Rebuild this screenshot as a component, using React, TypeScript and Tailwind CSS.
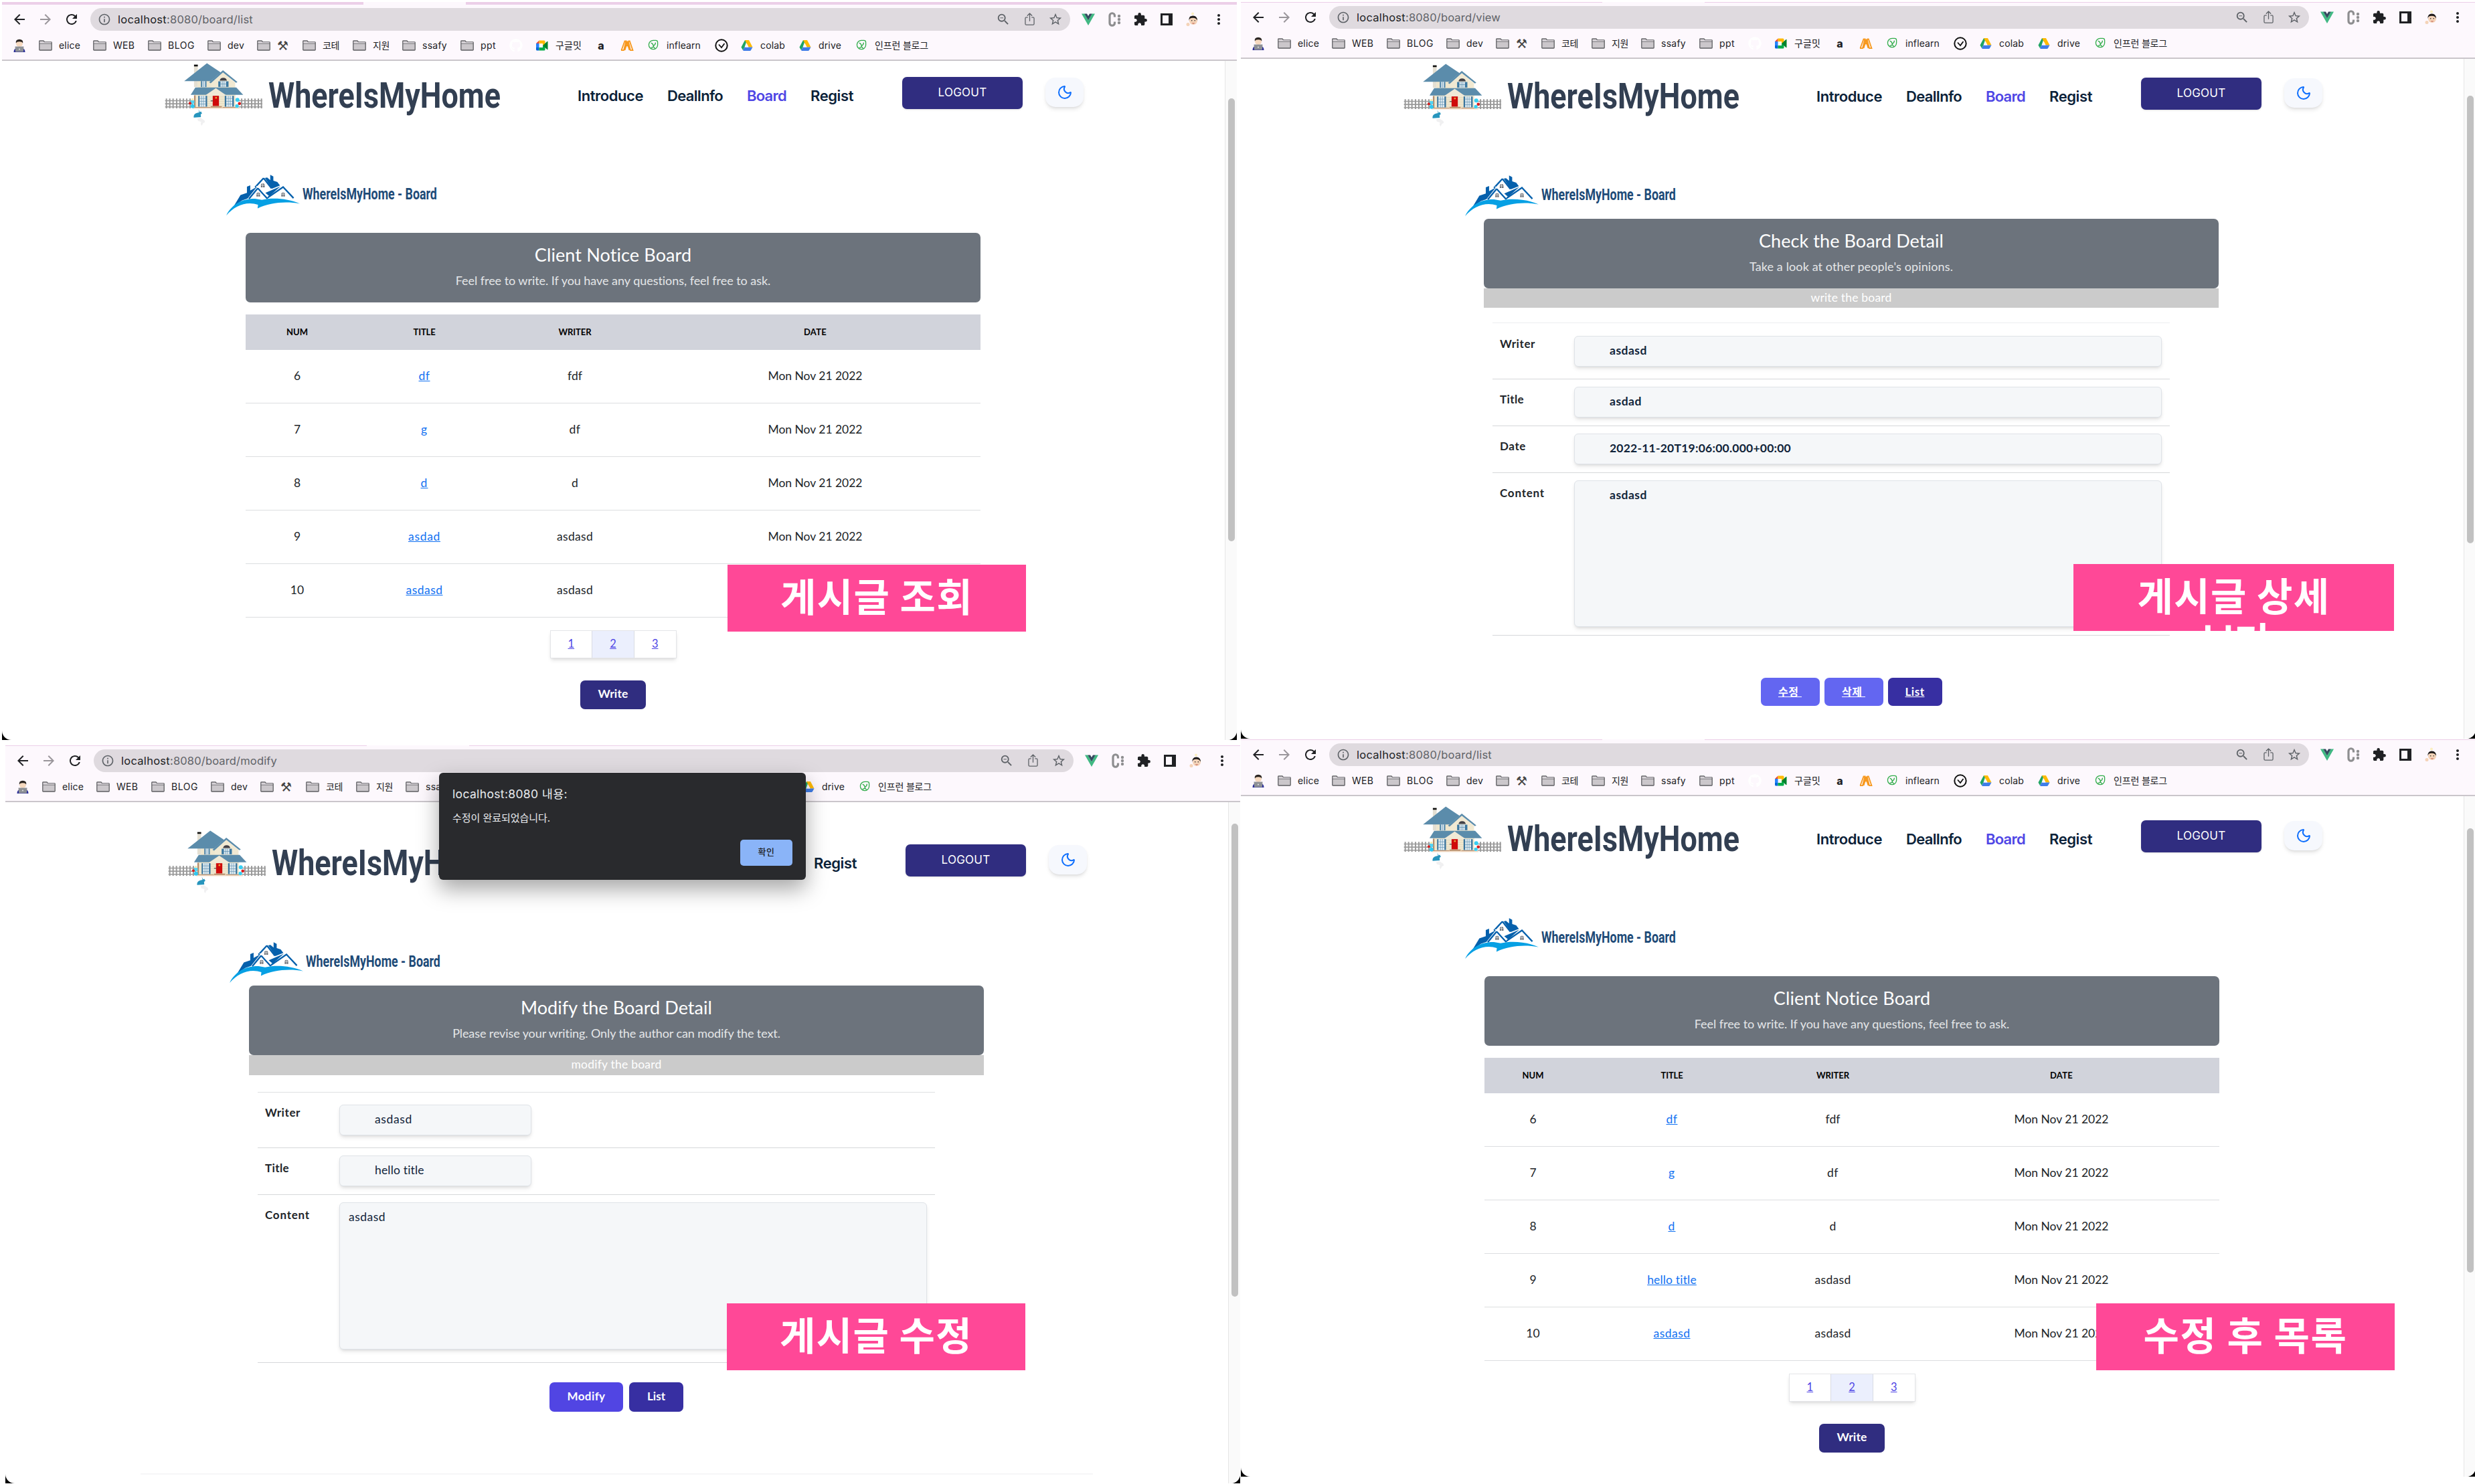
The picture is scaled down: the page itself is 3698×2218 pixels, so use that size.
import React, { useLayoutEffect, useRef, useState } from "react";
import {
  MdArrowBack,
  MdArrowForward,
  MdExtension,
  MdInfoOutline,
  MdMoreVert,
  MdRefresh,
  MdStarBorder,
  MdZoomOut,
} from "react-icons/md";
import { IoShareOutline } from "react-icons/io5";
import { FaGithub } from "react-icons/fa";
import { Moon } from "lucide-react";

/* ---------- text helpers ---------- */

/** Tracks a single line of text so that it fills exactly `w` pixels. */
function Fit({ w, children, className = "" }: { w: number; children: string; className?: string }) {
  const ref = useRef<HTMLSpanElement>(null);
  const [spacing, setSpacing] = useState(0);
  useLayoutEffect(() => {
    if (ref.current) {
      const natural = ref.current.getBoundingClientRect().width;
      setSpacing((w - natural) / children.length);
    }
  }, []);
  return (
    <span ref={ref} className={`whitespace-pre ${className}`} style={{ letterSpacing: `${spacing}px` }}>
      {children}
    </span>
  );
}

/** Condenses a single line of text horizontally to `w` pixels. */
function Condensed({ w, children, className = "" }: { w: number; children: string; className?: string }) {
  const ref = useRef<HTMLSpanElement>(null);
  const [scale, setScale] = useState(1);
  useLayoutEffect(() => {
    if (ref.current) setScale(w / ref.current.offsetWidth);
  }, []);
  return (
    <span className={`block shrink-0 ${className}`} style={{ width: w }}>
      <span ref={ref} className="inline-block origin-left whitespace-nowrap" style={{ transform: `scaleX(${scale})` }}>
        {children}
      </span>
    </span>
  );
}

/* ---------- drawings ---------- */

const FENCE_LEFT = [41, 56, 71, 87, 102, 117, 132, 147];
const FENCE_RIGHT = [379, 394, 409, 424, 439, 454, 468];

function HouseLogo() {
  return (
    <svg viewBox="30 15 445 290" className="h-[97px] w-[148px] shrink-0">
      <g stroke="#9a9a9a" strokeWidth="6">
        {FENCE_LEFT.concat(FENCE_RIGHT).map((x) => (
          <line key={x} x1={x} x2={x} y1="177" y2="222" />
        ))}
        <g strokeWidth="5">
          <path d="M35 187H160M35 201H160M35 215H160M365 187H472M365 201H472M365 215H472" />
        </g>
      </g>
      <rect x="165" y="26" width="17" height="100" fill="#e4dfd2" />
      <rect x="165" y="25" width="17" height="8" fill="#111" />
      <rect x="181" y="96" width="90" height="40" fill="#efe6cd" />
      <path d="M243 105L295 60L350 105V135H243Z" fill="#f1e9d2" />
      <path d="M223 19L285 60L240 99H121Z" fill="#5b8cab" />
      <path d="M233 104L295 50L360 103L354 107L295 60L240 109Z" fill="#5b8cab" />
      <rect x="196" y="99" width="25" height="27" fill="#4b83a8" />
      <path d="M202 99h13v27h-13z" fill="#dfeaf0" />
      <rect x="274" y="100" width="46" height="25" fill="#3b78a2" />
      <path d="M284 100h25v25h-25z" fill="#dfeaf0" />
      <path d="M292 100v25M300 100v25M284 112h25M208 99v27" stroke="#4b83a8" strokeWidth="2" />
      <path d="M280 97a17 17 0 0 1 33 0z" fill="#414148" />
      <rect x="166" y="155" width="185" height="65" fill="#f1e8cf" />
      <path d="M171 128H355L386 161H150Z" fill="#5b8cab" />
      <path d="M219 161L263 131L307 161V166H219Z" fill="#f0e9d6" />
      <path d="M223 170h80M223 180h80M223 190h80M223 200h80M223 210h80" stroke="#ddd3b8" strokeWidth="2" />
      <rect x="165" y="163" width="7" height="55" fill="#b58c6c" />
      <rect x="184" y="165" width="40" height="49" fill="#39749d" />
      <rect x="190" y="165" width="27" height="49" fill="#e2edf2" />
      <rect x="303" y="165" width="41" height="49" fill="#39749d" />
      <rect x="310" y="165" width="27" height="49" fill="#e2edf2" />
      <path d="M199 165v49M208 165v49M190 177h27M190 190h27M190 202h27M319 165v49M328 165v49M310 177h27M310 190h27M310 202h27" stroke="#5d8fb0" strokeWidth="2" />
      <rect x="249" y="165" width="28" height="46" fill="#cf0a0a" />
      <circle cx="264" cy="174" r="4" fill="#e9a23b" />
      <path d="M240 188h10" stroke="#333" strokeWidth="3" />
      <path d="M167 216h72v5h-72zM293 216h60v5h-60zM240 212h50v6h-50z" fill="#b98d6b" />
      <path d="M160 221h210" stroke="#f2dcc6" strokeWidth="4" />
      <circle cx="158" cy="193" r="9" fill="#52d3f3" />
      <circle cx="159" cy="212" r="9" fill="#2fc7f0" />
      <circle cx="147" cy="198" r="6" fill="#d81e1e" />
      <circle cx="158" cy="181" r="5" fill="#f4eab0" />
      <circle cx="360" cy="183" r="9" fill="#38cff2" />
      <circle cx="358" cy="211" r="8" fill="#38cff2" />
      <circle cx="369" cy="200" r="7" fill="#d81e1e" />
      <path d="M185 226l6 12 5-3 5 9-6 5 1 12-32 2c-2-10 4-18 14-21l10-2z" fill="#2795bd" />
      <path d="M180 268l14-4 18 12 2 8-8 4-6 12-5-8 2-10-14-4z" fill="#f0f0f1" />
    </svg>
  );
}

function BoardLogo() {
  return (
    <svg viewBox="300 515 340 190" className="h-[63px] w-[113px] shrink-0">
      <path d="M504 519l14 7v19l18 6 12 16-36 14-32-48 10-2 14 12z" fill="#0560ac" />
      <path d="M399 572l15-6v24l30-17-42 53-24 8-37 24 29-48 29-10z" fill="#0560ac" />
      <path d="M474 534L436 575M474 534L510 580" stroke="#0560ac" strokeWidth="7" fill="none" />
      <path d="M448 579L408 627M448 579L489 624L562 574L609 624" stroke="#0560ac" strokeWidth="7" fill="none" />
      <path d="M482 600l68-29-50 44z" fill="#0560ac" />
      <path d="M440 570l8 2 44 48" stroke="#fff" strokeWidth="3" fill="none" />
      <g fill="#6b6f76">
        <path d="M462 563a9 9 0 0 1 17 0v12h-17z" />
        <path d="M442 603a9 9 0 0 1 16 0v14h-16z" />
        <path d="M554 603a9 9 0 0 1 16 0v14h-16z" />
      </g>
      <path d="M470 554v22M461 566h19M450 594v24M441 606h18M562 594v24M553 606h18" stroke="#fff" strokeWidth="2" />
      <path d="M306 702C330 652 380 624 440 627l26 5c50-12 120-6 171 17c-60-12-135-6-190 21l2-16c-50-18-105 3-143 48z" fill="#06a0e4" />
    </svg>
  );
}

function FolderIcon() {
  return (
    <svg viewBox="0 0 20 16" className="h-4 w-5 shrink-0">
      <path d="M.8 14.2V1.6Q.8.8 1.6.8H7l1.6 2h9.8q.8 0 .8.8v10.6q0 .8-.8.8H1.6q-.8 0-.8-.8z" fill="#cbc7cb" stroke="#5f5f63" strokeWidth="1.3" />
      <path d="M1 5h18" stroke="#5f5f63" strokeWidth="1.2" />
      <path d="M1.5 3.9h17" stroke="#f3eff3" strokeWidth="1" />
    </svg>
  );
}

function CoderIcon() {
  return (
    <svg viewBox="0 0 20 20" className="h-5 w-5 shrink-0">
      <path d="M1.5 20q0-5 4-6h9q4 1 4 6z" fill="#2c2f9a" />
      <circle cx="10" cy="7" r="5" fill="#f6d9bf" />
      <path d="M4.8 6.5Q4 1 10 .8 16 1 15.2 6.5 14 4 10 4.2 6 4 4.8 6.5z" fill="#2b2522" />
      <path d="M3.500 11.500h13l-.6 8H4.100z" fill="#8d9095" />
      <circle cx="10" cy="15.500" r="1" fill="#e8e8ea" />
    </svg>
  );
}

function MeetIcon() {
  return (
    <svg viewBox="0 0 20 16" className="h-4 w-5 shrink-0">
      <path d="M1 5L5.500.5V5z" fill="#ea4335" />
      <path d="M1 5h4.500v6H1z" fill="#2684fc" />
      <path d="M1 11h4.500v4.500H2.500Q1 15.500 1 14z" fill="#0066da" />
      <path d="M5.500.5H13q1.500 0 1.500 1.500v5L11 8V5H5.500z" fill="#ffba00" />
      <path d="M5.500 11H11V8l3.500 1v5q0 1.500-1.500 1.500H5.500z" fill="#00ac47" />
      <path d="M11 8l6.500-6q1-.5 1 .5v11q0 1-1 .5z" fill="#00832d" />
    </svg>
  );
}

function DriveIcon() {
  return (
    <svg viewBox="0 0 20 18" className="h-[18px] w-5 shrink-0">
      <path d="M7 1h3l-3.500 10.500L4 16 1.500 11.500z" fill="#1fa463" />
      <path d="M7 1h6l5.500 10.500h-6z" fill="#ffba00" />
      <path d="M4 16l2.500-4.500h12L16 16q-.5 1-1.500 1h-9Q4.500 17 4 16z" fill="#3f7de8" />
      <path d="M10 6.500l2.600 5H7.400z" fill="#fdf8fd" />
    </svg>
  );
}

function SproutIcon() {
  return (
    <svg viewBox="0 0 20 18" className="h-[17px] w-5 shrink-0" fill="none" stroke="#33ad4c" strokeWidth="1.400">
      <path d="M10 1.500h4q3 0 3 3v4.500a7 7 0 1 1-7-7.500z" />
      <path d="M6.500 5.500q3.500 1 4 6l2.500 3M13.500 5q.5 3-3 5M10.500 11q-1.500 2.500-4 1.500" />
    </svg>
  );
}

function TrailIcon() {
  return (
    <svg viewBox="0 0 20 16" className="h-4 w-5 shrink-0" fill="none" stroke="#f7981d" strokeWidth="1.800">
      <path d="M1 15.200h4L8.500 1.500H6.500L1.500 15M8.500 1.500L10 9l1.500-7.500L15 15.200h3.500L13.800 1.500h-2M6.500 15L10 4l3.500 11" />
    </svg>
  );
}

function CheckIcon() {
  return (
    <svg viewBox="0 0 20 20" className="h-5 w-5 shrink-0" fill="none" stroke="#111" strokeWidth="2">
      <circle cx="10" cy="10" r="8.700" />
      <path d="M6 8.500l4 4.500 4.500-6" strokeWidth="1.800" />
    </svg>
  );
}

function VueIcon() {
  return (
    <svg viewBox="0 0 24 24" className="h-6 w-6">
      <path d="M2 3.500h4.500L12 13l5.500-9.500H22L12 21z" fill="#41b883" />
      <path d="M6.300 3.500H10l2 3.500 2-3.500h3.700L12 13.300z" fill="#34495e" />
    </svg>
  );
}

function ColumnsIcon() {
  return (
    <svg viewBox="0 0 24 24" className="h-6 w-6">
      <path d="M12.500 8.500V6.500a3.700 3.700 0 0 0-7.500 0v11a3.700 3.700 0 0 0 7.500 0v-2" fill="none" stroke="#8e8e90" strokeWidth="3.200" />
      <g fill="#8e8e90">
        <circle cx="19" cy="7" r="2.200" />
        <circle cx="19" cy="12" r="2.200" />
        <circle cx="19" cy="17" r="2.200" />
      </g>
    </svg>
  );
}

function SidePanelIcon() {
  return (
    <svg viewBox="0 0 24 24" className="h-6 w-6">
      <path d="M3 3h18v18H3z" fill="#202124" />
      <path d="M6 6h9v12H6z" fill="#fdf8fd" />
    </svg>
  );
}

function AvatarIcon() {
  return (
    <svg viewBox="0 0 24 24" className="h-6 w-6">
      <circle cx="12" cy="3.500" r="2" fill="#fbeec0" />
      <circle cx="13" cy="14" r="6" fill="#f4d3b8" />
      <path d="M6.500 14Q6 6.500 12.500 6.500T19 14q-1-4-6.500-4.200T6.500 14z" fill="#1e1a1a" />
      <circle cx="5" cy="19.500" r="2.500" fill="#f4d3b8" />
      <path d="M10.500 17.500q2.500 2 5 0z" fill="#b5473e" />
      <circle cx="10.700" cy="13.800" r=".8" fill="#222" />
      <circle cx="15.300" cy="13.800" r=".8" fill="#222" />
    </svg>
  );
}

/* ---------- browser chrome ---------- */

type Bookmark = { slot: string; icon: React.ReactNode; label?: string; w?: number; text?: string };

const BOOKMARKS: Bookmark[] = [
  { slot: "w-[39px]", icon: <CoderIcon /> },
  { slot: "w-[81px]", icon: <FolderIcon />, label: "elice", w: 32 },
  { slot: "w-[82px]", icon: <FolderIcon />, label: "WEB", w: 32 },
  { slot: "w-[89px]", icon: <FolderIcon />, label: "BLOG", w: 40 },
  { slot: "w-[74px]", icon: <FolderIcon />, label: "dev", w: 25 },
  { slot: "w-[68px]", icon: <FolderIcon />, label: "⚒", w: 16, text: "font-['DejaVu_Sans'] text-[19px] leading-5 text-[#444]" },
  { slot: "w-[75px]", icon: <FolderIcon />, label: "코테", w: 25 },
  { slot: "w-[74px]", icon: <FolderIcon />, label: "지원", w: 25 },
  { slot: "w-[87px]", icon: <FolderIcon />, label: "ssafy", w: 37 },
  { slot: "w-[73px]", icon: <FolderIcon />, label: "ppt", w: 23 },
  { slot: "w-[39px]", icon: <FaGithub className="h-5 w-5 text-white" /> },
  { slot: "w-[88px]", icon: <MeetIcon />, label: "구글밋", w: 39 },
  { slot: "w-[39px]", icon: <span className="w-5 text-center text-[16px] leading-5 font-extrabold">a</span> },
  { slot: "w-[39px]", icon: <TrailIcon /> },
  { slot: "w-[102px]", icon: <SproutIcon />, label: "inflearn", w: 51 },
  { slot: "w-[38px]", icon: <CheckIcon /> },
  { slot: "w-[87px]", icon: <DriveIcon />, label: "colab", w: 37 },
  { slot: "w-[84px]", icon: <DriveIcon />, label: "drive", w: 34 },
  { slot: "w-[120px]", icon: <SproutIcon />, label: "인프런 블로그", w: 80 },
];

function Chrome({ path, pathW, strip }: { path: string; pathW: number; strip: string }) {
  return (
    <header className="shrink-0 border-b-2 border-[#cac6cb] bg-[#fdf8fd] font-['Inter','Noto_Sans_CJK_KR',sans-serif] text-[#202124]">
      <div className={`flex bg-[#eccfe8] ${strip}`}>
        <div className="ml-[540px] w-[153px] bg-[#fdf8fd]" />
      </div>
      <div className="mt-[5px] flex h-[34px] items-center pl-[14px]">
        <div className="flex gap-[15px]">
          <MdArrowBack size={24} />
          <MdArrowForward size={24} className="text-[#9a969b]" />
          <MdRefresh size={24} />
        </div>
        <div className="ml-4 flex h-[34px] w-[1464px] items-center rounded-full bg-[#dfdadf] pr-[10px] pl-[11px] text-[16.500px] text-[#5f6368]">
          <MdInfoOutline size={20} />
          <Fit w={73} className="ml-[10px] text-[#202124]">localhost</Fit>
          <Fit w={pathW}>{path}</Fit>
          <div className="ml-auto flex gap-[15px]">
            <span className="flex w-6 justify-center"><MdZoomOut size={22} /></span>
            <span className="flex w-6 justify-center"><IoShareOutline size={21} /></span>
            <span className="flex w-6 justify-center"><MdStarBorder size={22} /></span>
          </div>
        </div>
        <div className="ml-[15px] flex items-center gap-[15px]">
          <VueIcon />
          <ColumnsIcon />
          <MdExtension size={24} className="scale-90" />
          <SidePanelIcon />
          <AvatarIcon />
          <MdMoreVert size={24} />
        </div>
      </div>
      <div className="flex h-[43px] items-center pl-4 text-[14px]">
        {BOOKMARKS.map((b, i) => (
          <div key={i} className={`flex shrink-0 items-center gap-[10px] ${b.slot}`}>
            {b.icon}
            {b.label && <Fit w={b.w ?? 30} className={b.text}>{b.label}</Fit>}
          </div>
        ))}
      </div>
    </header>
  );
}

type WindowProps = {
  path: string;
  pathW: number;
  strip?: string;
  height: string;
  offset: string;
  thumb: string;
  children: React.ReactNode;
};

function BrowserWindow({ path, pathW, strip = "h-px", height, offset, thumb, children }: WindowProps) {
  return (
    <section className={`w-[1845px] shrink-0 bg-black ${height}`}>
      <div className="flex h-full flex-col overflow-hidden rounded-b-[14px] bg-white">
        <Chrome path={path} pathW={pathW} strip={strip} />
        <div className="flex min-h-0 flex-1">
          <main className={`min-w-0 flex-1 overflow-hidden font-['Lato','Noto_Sans_CJK_KR',sans-serif] text-[17.500px] text-[#212529] ${offset}`}>
            <SiteHeader />
            {children}
          </main>
          <div className="w-[18px] shrink-0 border-l border-[#e6e6e6] bg-[#fafafa] pl-[4px]">
            <div className={`w-[10px] rounded-full bg-[#c1c1c1] ${thumb}`} />
          </div>
        </div>
      </div>
    </section>
  );
}

/* ---------- site ---------- */

function SiteHeader() {
  return (
    <>
      <div className="flex h-[97px] items-start pl-[242px]">
        <HouseLogo />
        <Condensed w={347} className="mt-[20px] ml-2 font-['Roboto'] text-[53px] leading-[60px] font-bold text-[#323f52]">
          WhereIsMyHome
        </Condensed>
        <nav className="mt-[34px] ml-[115px] flex gap-9 font-['Inter'] text-[22px] leading-8 font-semibold tracking-tight text-[#0b2138]">
          <Fit w={98}>Introduce</Fit>
          <Fit w={83}>DealInfo</Fit>
          <Fit w={59} className="text-[#4f46e5]">Board</Fit>
          <Fit w={64}>Regist</Fit>
        </nav>
        <button className="mt-[22px] ml-[73px] h-[48px] w-[180px] rounded-[7px] bg-[#302d80] font-['Inter'] text-[17px] text-white shadow-sm">
          <Fit w={73}>LOGOUT</Fit>
        </button>
        <button className="mt-[23px] ml-[34px] flex h-[44px] w-[57px] items-center justify-center rounded-[15px] bg-[#f6f8fd] text-[#0d6efd] shadow-md shadow-black/10">
          <Moon size={24} strokeWidth={2} />
        </button>
      </div>
      <div className="mt-[70px] flex pl-[333px]">
        <BoardLogo />
        <Condensed w={201} className="mt-[15px] ml-[3px] font-['Roboto'] text-[24px] leading-[30px] font-bold text-[#1d4a77]">
          WhereIsMyHome - Board
        </Condensed>
      </div>
    </>
  );
}

function Banner({ title, titleW, text, textW }: { title: string; titleW: number; text: string; textW: number }) {
  return (
    <div className="h-[104px] rounded-[7px] bg-[#6c737c] pt-[17px] text-center text-white">
      <h1 className="text-[27px] leading-8"><Fit w={titleW}>{title}</Fit></h1>
      <p className="mt-[11px] text-[18px] leading-[22px] text-[#e4e6e8]"><Fit w={textW}>{text}</Fit></p>
    </div>
  );
}

type Row = { num: string; title: string; titleW: number; writer: string; writerW: number; date?: string };

function ListPage({ rows, cols }: { rows: Row[]; cols: string }) {
  return (
    <div className="mt-[25px] ml-[364px] w-[1098px]">
      <Banner title="Client Notice Board" titleW={235} text="Feel free to write. If you have any questions, feel free to ask." textW={471} />
      <div className={`mt-[18px] grid h-[53px] items-center bg-[#d1d3db] text-center text-[13px] font-bold text-black ${cols}`}>
        <span><Fit w={32}>NUM</Fit></span>
        <span><Fit w={33}>TITLE</Fit></span>
        <span><Fit w={49}>WRITER</Fit></span>
        <span><Fit w={34}>DATE</Fit></span>
      </div>
      {rows.map((r) => (
        <div key={r.num} className={`grid h-[80px] items-center border-b border-[#dcdee0] text-center ${cols}`}>
          <span>{r.num}</span>
          <a className="text-[#1272f2] underline"><Fit w={r.titleW}>{r.title}</Fit></a>
          <span><Fit w={r.writerW}>{r.writer}</Fit></span>
          {r.date && <span><Fit w={141}>{r.date}</Fit></span>}
        </div>
      ))}
      <div className="mt-[19px] flex justify-center">
        <div className="flex h-[42px] w-[189px] divide-x divide-[#d9dce3] border border-[#e4e5e8] text-[16.500px] leading-[38px] text-[#4f46e5] underline shadow-md shadow-black/10">
          <span className="flex-1 text-center">1</span>
          <span className="flex-1 bg-[#ebeffd] text-center">2</span>
          <span className="flex-1 text-center">3</span>
        </div>
      </div>
      <div className="mt-[33px] flex justify-center">
        <button className="h-[43px] w-[98px] rounded-[7px] bg-[#302d80] pb-[2px] font-bold text-white"><Fit w={45}>Write</Fit></button>
      </div>
    </div>
  );
}

type FieldProps = {
  label: string;
  labelW: number;
  value: string;
  valueW: number;
  row: string;
  box: string;
};

function Field({ label, labelW, value, valueW, row, box }: FieldProps) {
  return (
    <div className={`ml-[13px] flex w-[1012px] items-start border-b border-[#d6d8da] ${row}`}>
      <div className="w-[110px] pl-[11px] text-[17px] leading-5 font-bold"><Fit w={labelW}>{label}</Fit></div>
      <div className={`ml-3 rounded-[6px] border border-[#dfe3e8] bg-[#f5f7f9] leading-[42px] text-[#10243a] shadow-md shadow-black/10 ${box}`}>
        <Fit w={valueW}>{value}</Fit>
      </div>
    </div>
  );
}

function Subtitle({ children, w, className }: { children: string; w: number; className: string }) {
  return (
    <div className={`bg-[#cbcbcb] text-center text-white ${className}`}>
      <Fit w={w}>{children}</Fit>
    </div>
  );
}

function DetailPage() {
  return (
    <div className="mt-[3px] ml-[363px] w-[1098px]">
      <Banner title="Check the Board Detail" titleW={276} text="Take a look at other people's opinions." textW={304} />
      <Subtitle w={121} className="h-[29px] leading-[27px]">write the board</Subtitle>
      <div className="mt-[22px] ml-[13px] w-[1012px] border-t border-[#eceef0]" />
      <Field label="Writer" labelW={53} value="asdasd" valueW={56} row="h-[84px] *:first:mt-[21px]" box="mt-[19px] h-[46px] w-[878px] pl-[52px] font-bold" />
      <Field label="Title" labelW={36} value="asdad" valueW={48} row="h-[70px] *:first:mt-[20px]" box="mt-[11px] h-[46px] w-[878px] pl-[52px] font-bold" />
      <Field label="Date" labelW={39} value="2022-11-20T19:06:00.000+00:00" valueW={271} row="h-[70px] *:first:mt-[20px]" box="mt-[11px] h-[46px] w-[878px] pl-[52px] font-bold" />
      <Field label="Content" labelW={67} value="asdasd" valueW={56} row="h-[243px] *:first:mt-[20px]" box="mt-[11px] h-[219px] w-[878px] pl-[52px] font-bold" />
      <div className="mt-[63px] flex justify-center gap-[7px] text-[16px] leading-[38px] font-bold text-white">
        <button className="h-[42px] w-[88px] rounded-[7px] bg-[#6366f1] underline"><Fit w={35}>수정 </Fit></button>
        <button className="h-[42px] w-[88px] rounded-[7px] bg-[#6366f1] underline"><Fit w={35}>삭제 </Fit></button>
        <button className="h-[42px] w-[81px] rounded-[7px] bg-[#372fa2] text-[17px] underline"><Fit w={29}>List</Fit></button>
      </div>
    </div>
  );
}

function ModifyPage() {
  return (
    <>
      <div className="mt-[3px] ml-[364px] w-[1098px]">
        <Banner title="Modify the Board Detail" titleW={286} text="Please revise your writing. Only the author can modify the text." textW={490} />
        <Subtitle w={135} className="h-[30px] leading-[28px]">modify the board</Subtitle>
        <div className="mt-[25px] ml-[13px] w-[1012px] border-t border-[#dfe1e3]" />
        <Field label="Writer" labelW={53} value="asdasd" valueW={56} row="h-[83px] *:first:mt-[20px]" box="mt-[18px] h-[46px] w-[287px] pl-[52px]" />
        <Field label="Title" labelW={36} value="hello title" valueW={74} row="h-[70px] *:first:mt-[20px]" box="mt-[11px] h-[46px] w-[287px] pl-[52px]" />
        <Field label="Content" labelW={67} value="asdasd" valueW={55} row="h-[251px] *:first:mt-[20px]" box="mt-[11px] h-[220px] w-[878px] pl-[13px]" />
        <div className="mt-[29px] flex justify-center gap-[9px] text-[17px] font-bold text-white">
          <button className="h-[44px] w-[110px] rounded-[7px] bg-[#5145e3] pb-[2px]"><Fit w={57}>Modify</Fit></button>
          <button className="h-[44px] w-[81px] rounded-[7px] bg-[#372fa2] pb-[2px]"><Fit w={27}>List</Fit></button>
        </div>
      </div>
      <div className="mt-[92px] ml-[202px] h-[2px] w-[1423px] bg-[#f6f6f7]" />
    </>
  );
}

function AlertDialog() {
  return (
    <div className="absolute top-[1155px] left-[656px] flex h-[160px] w-[548px] flex-col rounded-[6px] bg-[#292a2d] px-5 pt-[20px] font-['Inter','Noto_Sans_CJK_KR',sans-serif] text-[#e8eaed] shadow-[0_14px_32px_rgba(0,0,0,0.35)]">
      <p className="text-[17.500px] leading-6"><Fit w={172}>localhost:8080 내용:</Fit></p>
      <p className="mt-[13px] text-[15px] leading-[22px]"><Fit w={146}>수정이 완료되었습니다.</Fit></p>
      <button className="mt-[21px] h-[39px] w-[78px] self-end rounded-[5px] bg-[#8ab4f8] pb-[2px] text-[13px] font-medium text-[#202124]">
        <Fit w={25}>확인</Fit>
      </button>
    </div>
  );
}

function Caption({ place, lines }: { place: string; lines: [string, number][] }) {
  return (
    <div className={`absolute h-[100px] overflow-hidden bg-[#ff4897] pt-[12px] text-center font-['Noto_Sans_CJK_KR',sans-serif] text-[58px] leading-[67px] font-bold text-white ${place}`}>
      {lines.map(([text, w]) => (
        <div key={text}><Fit w={w}>{text}</Fit></div>
      ))}
    </div>
  );
}

const DATE = "Mon Nov 21 2022";
const BASE_ROWS: Row[] = [
  { num: "6", title: "df", titleW: 17, writer: "fdf", writerW: 22, date: DATE },
  { num: "7", title: "g", titleW: 10, writer: "df", writerW: 17, date: DATE },
  { num: "8", title: "d", titleW: 11, writer: "d", writerW: 10, date: DATE },
];
const LAST_ROW: Row = { num: "10", title: "asdasd", titleW: 55, writer: "asdasd", writerW: 54 };
const BEFORE_ROWS: Row[] = [
  ...BASE_ROWS,
  { num: "9", title: "asdad", titleW: 48, writer: "asdasd", writerW: 54, date: DATE },
  LAST_ROW,
];
const AFTER_ROWS: Row[] = [
  ...BASE_ROWS,
  { num: "9", title: "hello title", titleW: 74, writer: "asdasd", writerW: 54, date: DATE },
  { ...LAST_ROW, date: DATE },
];

export default function App() {
  return (
    <div className="relative h-[2218px] w-[3698px] overflow-hidden bg-white">
      <div className="flex pt-[3px]">
        <div className="flex w-[1854px] shrink-0 flex-col gap-2 pl-[3px]">
          <BrowserWindow path=":8080/board/list" pathW={129} strip="h-[4px]" height="h-[1103px]" offset="pt-[2px]" thumb="mt-[56px] h-[662px]">
            <ListPage rows={BEFORE_ROWS} cols="grid-cols-[154px_226px_224px_494px]" />
          </BrowserWindow>
          <div className="pl-[5px]">
            <BrowserWindow path=":8080/board/modify" pathW={160} height="h-[1103px]" offset="pt-[41px]" thumb="mt-[32px] h-[707px]">
              <ModifyPage />
            </BrowserWindow>
          </div>
        </div>
        <div className="flex w-[1844px] shrink-0 flex-col gap-px">
          <BrowserWindow path=":8080/board/view" pathW={142} height="h-[1101px]" offset="pt-[6px]" thumb="mt-[55px] h-[669px]">
            <DetailPage />
          </BrowserWindow>
          <BrowserWindow path=":8080/board/list" pathW={129} height="h-[1102px]" offset="pt-[14px]" thumb="mt-[48px] h-[664px]">
            <ListPage rows={AFTER_ROWS} cols="grid-cols-[145px_270px_211px_472px]" />
          </BrowserWindow>
        </div>
      </div>
      <AlertDialog />
      <Caption place="top-[844px] left-[1087px] w-[446px]" lines={[["게시글 조회", 288]]} />
      <Caption place="top-[843px] left-[3098px] w-[479px]" lines={[["게시글 상세", 288], ["보기", 100]]} />
      <Caption place="top-[1948px] left-[1086px] w-[446px]" lines={[["게시글 수정", 288]]} />
      <Caption place="top-[1948px] left-[3132px] w-[446px]" lines={[["수정 후 목록", 305]]} />
    </div>
  );
}
